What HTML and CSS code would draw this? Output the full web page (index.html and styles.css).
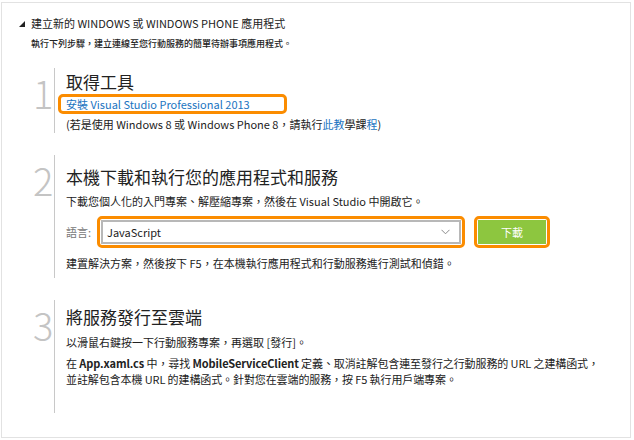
FILE: index.html
```html
<!DOCTYPE html>
<html lang="zh-Hant">
<head>
<meta charset="utf-8">
<title>建立新的 WINDOWS 或 WINDOWS PHONE 應用程式</title>
<link rel="stylesheet" href="styles.css">
</head>
<body>
<div class="panel">
  <div class="head">
    <svg class="tri" width="6" height="6" viewBox="0 0 6 6"><polygon points="6,0 6,6 0,6" fill="#222"/></svg>
    <span class="head-text">建立新的 WINDOWS 或 WINDOWS PHONE 應用程式</span>
  </div>
  <div class="sub">執行下列步驟，建立連線至您行動服務的簡單待辦事項應用程式。</div>

  <div class="steps">
    <div class="step step1">
      <div class="num">1</div>
      <div class="body">
        <div class="title">取得工具</div>
        <div class="hl linkbox"><a class="link" href="#">安裝 Visual Studio Professional 2013</a></div>
        <div class="txt note">(若是使用 Windows 8 或 Windows Phone 8，請執行<span class="blue">此教</span>學課<span class="blue">程</span>)</div>
      </div>
    </div>

    <div class="step step2">
      <div class="num">2</div>
      <div class="body">
        <div class="title">本機下載和執行您的應用程式和服務</div>
        <div class="txt desc">下載您個人化的入門專案、解壓縮專案，然後在 Visual Studio 中開啟它。</div>
        <div class="form">
          <span class="label">語言:</span>
          <div class="hl selwrap">
            <div class="select">
              <span>JavaScript</span>
              <svg width="9" height="6" viewBox="0 0 9 6"><polyline points="0.5,0.8 4.5,4.8 8.5,0.8" fill="none" stroke="#8a8a8a" stroke-width="1"/></svg>
            </div>
          </div>
          <div class="hl btnwrap"><div class="btn">下載</div></div>
        </div>
        <div class="txt after">建置解決方案，然後按下 F5，在本機執行應用程式和行動服務進行測試和偵錯。</div>
      </div>
    </div>

    <div class="step step3">
      <div class="num">3</div>
      <div class="body">
        <div class="title">將服務發行至雲端</div>
        <div class="txt desc3">以滑鼠右鍵按一下行動服務專案，再選取 [發行]。</div>
        <div class="txt para">在 <b>App.xaml.cs</b> 中，尋找 <b>MobileServiceClient</b> 定義、取消註解包含連至發行之行動服務的 URL 之建構函式，<br>並註解包含本機 URL 的建構函式。針對您在雲端的服務，按 F5 執行用戶端專案。</div>
      </div>
    </div>
  </div>
</div>
</body>
</html>
```

FILE: styles.css
```css
html, body {
  margin: 0;
  padding: 0;
  background: #fff;
}
body {
  font-family: "Noto Sans CJK TC", "Noto Sans", sans-serif;
  color: #222;
}
.panel {
  margin: 2px 0 0 1px;
  width: 630px;
  height: 436px;
  box-sizing: border-box;
  border: 1px solid #e2e2e2;
  padding: 13px 0 0 17px;
}
.head {
  display: flex;
  align-items: center;
  gap: 6px;
  height: 14px;
}
.tri {
  display: block;
  margin-top: 1px;
}
.head-text {
  font-size: 11px;
  line-height: 14px;
  color: #222;
}
.sub {
  margin: 7px 0 0 12px;
  font-size: 9px;
  line-height: 14px;
  font-weight: 500;
  color: #222;
}
.steps {
  margin: 17px 0 0 14px;
  display: flex;
  flex-direction: column;
  gap: 22px;
}
.step {
  display: flex;
}
.num {
  width: 21px;
  box-sizing: border-box;
  padding-right: 3px;
  text-align: right;
  font-size: 38px;
  line-height: 38px;
  font-weight: 200;
  color: #c4c4c4;
  margin-top: 6px;
}
.body {
  border-left: 1px solid #c8c8c8;
  padding-left: 11px;
  flex: 1;
}
.title {
  font-size: 17px;
  line-height: 20px;
  color: #222;
}
.txt {
  font-size: 11px;
  line-height: 14px;
  color: #222;
}
.step1 .body { padding: 4px 0 2px 11px; }
.step2 .body { padding: 12px 0 8px 11px; }
.step3 .body { padding: 7px 0 26px 11px; }

.hl {
  border: 3px solid #fb8c00;
  border-radius: 5px;
  box-sizing: border-box;
}
.linkbox {
  margin: 2px 0 0 -8px;
  width: 229px;
  height: 20px;
  padding-left: 5px;
  font-size: 11px;
  line-height: 14px;
}
.link {
  color: #1a74bf;
  text-decoration: none;
}
.blue { color: #1a74bf; }
.note { margin-top: 3px; }

.desc { margin-top: 7px; }
.form {
  margin-top: 8px;
  display: flex;
  align-items: center;
  height: 32px;
}
.label {
  font-size: 11px;
  color: #777;
  width: 31px;
}
.selwrap {
  width: 368px;
  height: 32px;
  padding: 1px;
}
.select {
  height: 100%;
  box-sizing: border-box;
  border: 2px solid #b8b8b8;
  display: flex;
  align-items: center;
  justify-content: space-between;
  padding: 0 9px 0 4px;
  font-size: 11px;
  color: #222;
}
.btnwrap {
  margin-left: 9px;
  width: 76px;
  height: 32px;
  padding: 1px;
}
.btn {
  height: 100%;
  background: #8dc63f;
  color: #fff;
  font-size: 11px;
  display: flex;
  align-items: center;
  justify-content: center;
}
.after { margin-top: 8px; }

.desc3 { margin-top: 8px; }
.para {
  margin-top: 6px;
  line-height: 16px;
  letter-spacing: -0.1px;
}
.para b { font-weight: 700; }
```
